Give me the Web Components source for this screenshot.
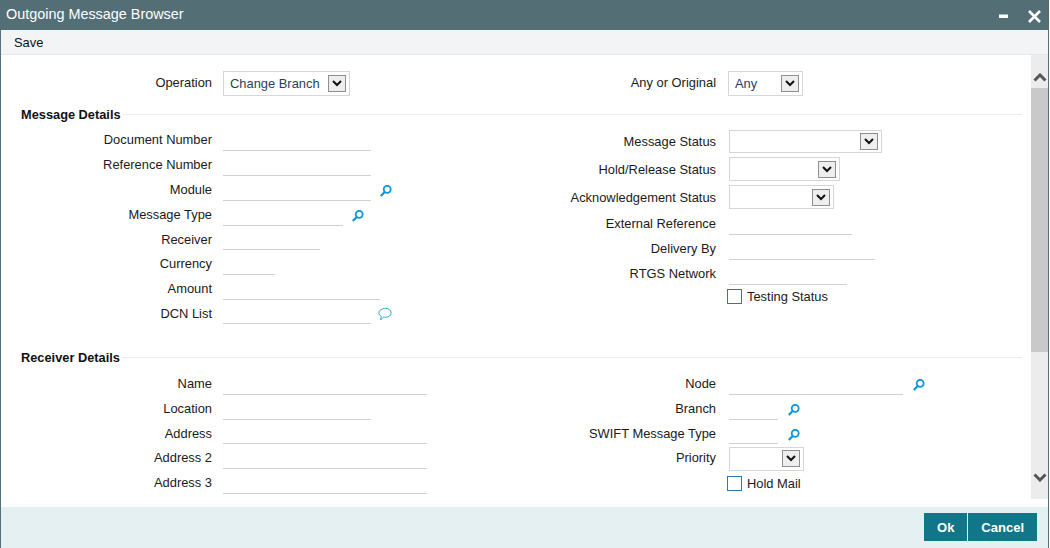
<!DOCTYPE html>
<html>
<head>
<meta charset="utf-8">
<title>Outgoing Message Browser</title>
<style>
  html, body { margin: 0; padding: 0; height: 100%; overflow: hidden; background: #fff; }
  body { font: 12.9px "Liberation Sans", Arial, sans-serif; color: #1a1a1a; }
</style>
</head>
<body>
<x-window>
  <x-titlebar slot="title">Outgoing Message Browser</x-titlebar>
  <x-toolbar slot="tools">Save</x-toolbar>

  <x-row h="31" top="13">
    <x-field slot="left" label="Operation" style="--label-lift:2px"><x-select w="127" h="25" value="Change Branch"></x-select></x-field>
    <x-field slot="right" label="Any or Original" style="--label-lift:2px"><x-select w="75" h="25" value="Any" style="margin-left:-1px"></x-select></x-field>
  </x-row>

  <x-section heading="Message Details" style="--gap-top:7px">
    <x-stack slot="left" style="--top:5px">
      <x-field h="25" label="Document Number"><x-input w="148"></x-input></x-field>
      <x-field h="25" label="Reference Number"><x-input w="148"></x-input></x-field>
      <x-field h="25" label="Module"><x-input w="148"></x-input><x-icon kind="search" gap="9"></x-icon></x-field>
      <x-field h="25" label="Message Type"><x-input w="120"></x-input><x-icon kind="search" gap="9"></x-icon></x-field>
      <x-field h="24" label="Receiver"><x-input w="97"></x-input></x-field>
      <x-field h="25" label="Currency"><x-input w="52"></x-input></x-field>
      <x-field h="25" label="Amount"><x-input w="157"></x-input></x-field>
      <x-field h="24" label="DCN List"><x-input w="148"></x-input><x-icon kind="note" gap="7"></x-icon></x-field>
    </x-stack>
    <x-stack slot="right" style="--top:5px">
      <x-field h="28" label="Message Status"><x-select w="153" h="23"></x-select></x-field>
      <x-field h="28" label="Hold/Release Status"><x-select w="111" h="24"></x-select></x-field>
      <x-field h="28" label="Acknowledgement Status"><x-select w="105" h="24"></x-select></x-field>
      <x-field h="25" label="External Reference"><x-input w="123"></x-input></x-field>
      <x-field h="25" label="Delivery By"><x-input w="146"></x-input></x-field>
      <x-field h="25" label="RTGS Network"><x-input w="118"></x-input></x-field>
      <x-field h="21" label=""><x-check label="Testing Status"></x-check></x-field>
    </x-stack>
  </x-section>

  <x-section heading="Receiver Details" style="--gap-top:24px">
    <x-stack slot="left" style="--top:6px">
      <x-field h="25" label="Name"><x-input w="204"></x-input></x-field>
      <x-field h="25" label="Location"><x-input w="148"></x-input></x-field>
      <x-field h="24" label="Address"><x-input w="204"></x-input></x-field>
      <x-field h="25" label="Address 2"><x-input w="204"></x-input></x-field>
      <x-field h="25" label="Address 3"><x-input w="204"></x-input></x-field>
    </x-stack>
    <x-stack slot="right" style="--top:6px">
      <x-field h="25" label="Node"><x-input w="174"></x-input><x-icon kind="search" gap="10"></x-icon></x-field>
      <x-field h="25" label="Branch"><x-input w="49"></x-input><x-icon kind="search" gap="10"></x-icon></x-field>
      <x-field h="24" label="SWIFT Message Type"><x-input w="49"></x-input><x-icon kind="search" gap="10"></x-icon></x-field>
      <x-field h="25" label="Priority"><x-select w="75" h="24" style="margin-top:2px"></x-select></x-field>
      <x-field h="27" label=""><x-check label="Hold Mail"></x-check></x-field>
    </x-stack>
  </x-section>

  <x-button slot="actions">Ok</x-button>
  <x-button slot="actions">Cancel</x-button>
</x-window>

<script>
// small helper, every element gets its own open shadow root
class Base extends HTMLElement {
  constructor() {
    super();
    this.attachShadow({ mode: 'open' });
  }
  connectedCallback() {
    this.render();
  }
}

class XWindow extends Base {
  render() {
    this.shadowRoot.innerHTML = `
      <style>
        :host { display: flex; flex-direction: column; width: 1049px; height: 548px; box-sizing: border-box;
                border-left: 1px solid #54707a; border-right: 1px solid #54707a; background: #fff; }
        .main { flex: 1; display: flex; min-height: 0; }
        .content { flex: 1; min-width: 0; overflow: hidden; }
        .actions { height: 41px; flex: none; background: #e5f0f3; display: flex; justify-content: flex-end;
                   align-items: flex-start; gap: 1px; padding: 6px 11px 0 0; box-sizing: border-box; }
      </style>
      <slot name="title"></slot>
      <slot name="tools"></slot>
      <div class="main">
        <div class="content"><slot></slot></div>
        <x-scrollbar></x-scrollbar>
      </div>
      <div class="actions"><slot name="actions"></slot></div>
    `;
  }
}

class XTitlebar extends Base {
  render() {
    this.shadowRoot.innerHTML = `
      <style>
        :host { display: flex; align-items: center; justify-content: space-between; height: 30px; flex: none;
                background: #546e75; color: #fff; font-size: 14.4px; padding: 0 8px 2px 6px; margin: 0 -1px;
                box-sizing: border-box; }
        .btns { display: flex; align-items: center; gap: 17px; padding-top: 4px; }
        svg { display: block; }
      </style>
      <span><slot></slot></span>
      <div class="btns">
        <svg width="12" height="13" viewBox="0 0 12 13"><rect x="0" y="4.500" width="9" height="3.500" fill="#fff"/></svg>
        <svg width="13" height="13" viewBox="0 0 13 13"><path d="M1 1L12 12M12 1L1 12" stroke="#fff" stroke-width="2.600" fill="none"/></svg>
      </div>
    `;
  }
}

class XToolbar extends Base {
  render() {
    this.shadowRoot.innerHTML = `
      <style>
        :host { display: flex; align-items: center; height: 25px; flex: none; background: #f3f4f6;
                border-bottom: 1px solid #e6e7e9; box-sizing: border-box; padding-left: 13px; color: #111; }
      </style>
      <slot></slot>
    `;
  }
}

class XRow extends Base {
  render() {
    this.shadowRoot.innerHTML = `
      <style>
        :host { display: grid; grid-template-columns: 506px 1fr; align-items: center;
                height: ${this.getAttribute('h')}px; margin-top: ${this.getAttribute('top')}px; }
      </style>
      <slot name="left"></slot><slot name="right"></slot>
    `;
  }
}

class XSection extends Base {
  render() {
    this.shadowRoot.innerHTML = `
      <style>
        :host { display: block; margin-top: var(--gap-top, 0); }
        .head { display: flex; align-items: center; margin: 0 9px 0 20px; height: 16px; gap: 2px; }
        .head b { font-size: 12.8px; color: #111; white-space: nowrap; }
        .head i { flex: 1; height: 1px; background: #ececec; }
        .cols { display: grid; grid-template-columns: 506px 1fr; }
      </style>
      <div class="head"><b>${this.getAttribute('heading')}</b><i></i></div>
      <div class="cols"><slot name="left"></slot><slot name="right"></slot></div>
    `;
  }
}

class XStack extends Base {
  render() {
    this.shadowRoot.innerHTML = `
      <style>
        :host { display: flex; flex-direction: column; padding-top: var(--top, 0); }
      </style>
      <slot></slot>
    `;
  }
}

class XField extends Base {
  render() {
    const h = this.getAttribute('h');
    const right = this.getAttribute('slot') === 'right' || this.parentElement.getAttribute('slot') === 'right';
    this.shadowRoot.innerHTML = `
      <style>
        :host { display: grid; align-items: center; grid-template-columns: 222px 1fr;
                ${h ? `height: ${h}px;` : ''} }
        .label { text-align: right; padding-right: ${right ? 13 : 11}px; margin-bottom: var(--label-lift, 0);
                 white-space: nowrap; color: #1a1a1a; }
        .ctl { display: flex; align-items: center; align-self: stretch; margin: 1px 0; min-height: 0; }
      </style>
      <div class="label">${this.getAttribute('label') || ''}</div>
      <div class="ctl"><slot></slot></div>
    `;
  }
}

class XInput extends Base {
  render() {
    this.shadowRoot.innerHTML = `
      <style>
        :host { display: block; flex: none; align-self: stretch; width: ${this.getAttribute('w')}px; }
        input { display: block; width: 100%; height: 100%; box-sizing: border-box; border: 0;
                border-bottom: 1px solid #cfd2d4; padding: 0 4px; outline: 0; background: transparent;
                font: inherit; }
      </style>
      <input type="text">
    `;
  }
}

class XSelect extends Base {
  render() {
    this.shadowRoot.innerHTML = `
      <style>
        :host { display: flex; flex: none; align-items: center; justify-content: space-between; box-sizing: border-box;
                width: ${this.getAttribute('w')}px; height: ${this.getAttribute('h')}px;
                border: 1px solid #d6d6d6; padding: 0 3px 0 6px; color: #1f3f63; }
        .arrow { flex: none; width: 18px; height: 17px; box-sizing: border-box; border: 1px solid #8f8f8f;
                 background: #eeeeee; display: flex; align-items: center; justify-content: center; }
        svg { display: block; }
      </style>
      <span>${this.getAttribute('value') || ''}</span>
      <div class="arrow">
        <svg width="10" height="7" viewBox="0 0 10 7"><path d="M1 1L5 5L9 1" stroke="#111" stroke-width="2" fill="none"/></svg>
      </div>
    `;
  }
}

class XIcon extends Base {
  render() {
    const kind = this.getAttribute('kind');
    const search = `<svg width="12" height="12" viewBox="0 0 12 12">
        <circle cx="7.200" cy="4.300" r="3.500" stroke="#0f97d8" stroke-width="1.800" fill="none"/>
        <path d="M4.700 6.900L.8 11" stroke="#0f97d8" stroke-width="2.200" fill="none"/></svg>`;
    const note = `<svg width="14" height="14" viewBox="0 0 14 14">
        <path d="M7.500 1.400c3 0 5.600 1.700 5.600 4.500s-2.600 4.400-5.600 4.400c-.8 0-1.400-.1-2-.2L2.600 13l.6-3.600C1.800 8.500 .9 7.300 .9 5.900c0-2.800 3.600-4.500 6.600-4.500z"
              stroke="#2ca6dc" stroke-width="1" fill="none"/></svg>`;
    this.shadowRoot.innerHTML = `
      <style>
        :host { display: block; flex: none; margin-left: ${this.getAttribute('gap')}px; margin-top: ${kind === 'note' ? 1 : 3}px; }
        svg { display: block; }
      </style>
      ${kind === 'note' ? note : search}
    `;
  }
}

class XCheck extends Base {
  render() {
    this.shadowRoot.innerHTML = `
      <style>
        :host { display: flex; align-items: center; gap: 5px; margin-left: -2px; color: #1a1a1a; white-space: nowrap; }
        i { display: block; width: 15px; height: 15px; box-sizing: border-box; border: 1px solid #2e78ad; background: #fff; }
      </style>
      <i></i><span>${this.getAttribute('label')}</span>
    `;
  }
}

class XButton extends Base {
  render() {
    this.shadowRoot.innerHTML = `
      <style>
        :host { display: flex; align-items: center; justify-content: center; height: 28px; padding: 0 13px;
                background: #117687; color: #fff; font-weight: bold; font-size: 13px; }
      </style>
      <slot></slot>
    `;
  }
}

class XScrollbar extends Base {
  render() {
    const arrow = d => `<svg width="14" height="9" viewBox="0 0 14 9"><path d="${d}" stroke="#555" stroke-width="3" fill="none"/></svg>`;
    this.shadowRoot.innerHTML = `
      <style>
        :host { display: flex; flex-direction: column; flex: none; width: 17px; margin: 0 0 8px; background: #ececec; }
        .btn { height: 33px; flex: none; display: flex; align-items: center; justify-content: center; padding-top: 11px; box-sizing: border-box; }
        .btn.dn { padding: 0 0 11px; }
        .thumb { height: 264px; flex: none; background: #c9c9c9; }
        .fill { flex: 1; }
        svg { display: block; }
      </style>
      <div class="btn">${arrow('M1.500 7.500L7 2L12.500 7.500')}</div>
      <div class="thumb"></div>
      <div class="fill"></div>
      <div class="btn dn">${arrow('M1.500 1.500L7 7L12.500 1.500')}</div>
    `;
  }
}

customElements.define('x-window', XWindow);
customElements.define('x-titlebar', XTitlebar);
customElements.define('x-toolbar', XToolbar);
customElements.define('x-row', XRow);
customElements.define('x-section', XSection);
customElements.define('x-stack', XStack);
customElements.define('x-field', XField);
customElements.define('x-input', XInput);
customElements.define('x-select', XSelect);
customElements.define('x-icon', XIcon);
customElements.define('x-check', XCheck);
customElements.define('x-button', XButton);
customElements.define('x-scrollbar', XScrollbar);
</script>
</body>
</html>
